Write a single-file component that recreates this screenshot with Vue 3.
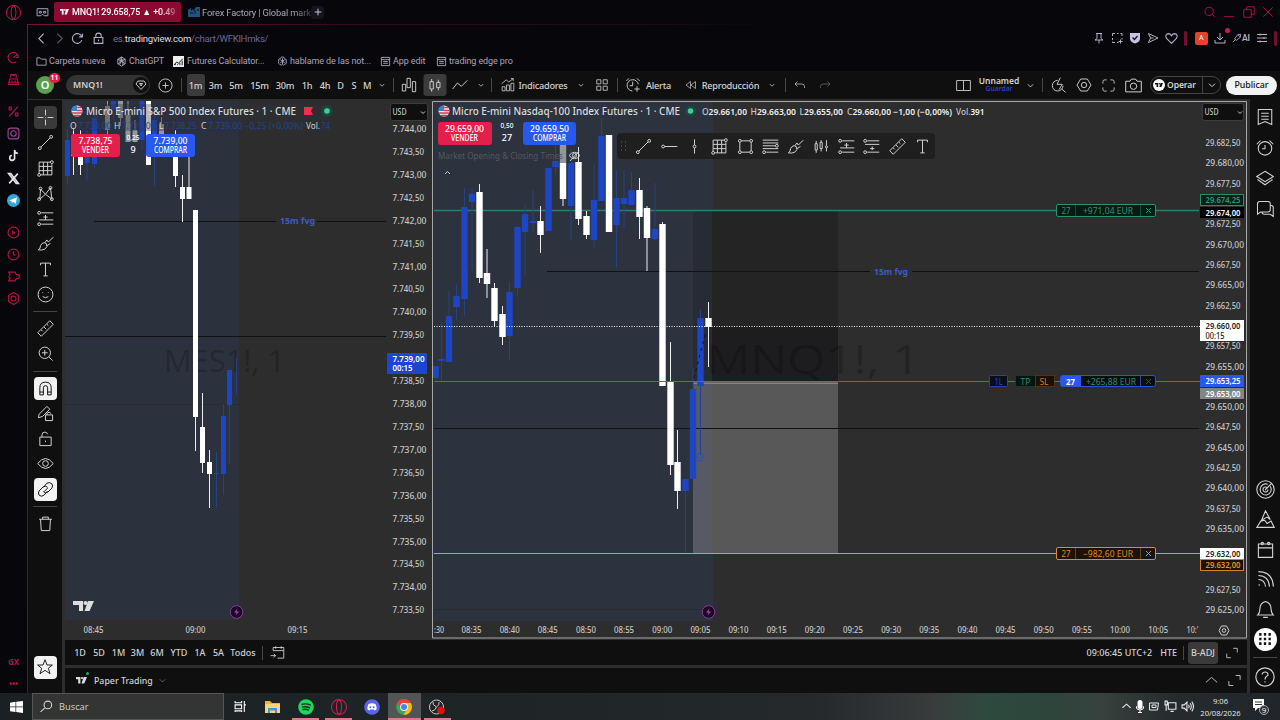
<template>
  <div class="screen">
    <div class="window">
      <aside class="gx-bar">
        <Icon name="opera" :size="17" class="gx-logo" />
        <div v-for="(group, i) in gxGroups" :key="i" class="gx-group">
          <span v-for="item in group" :key="item" class="gx-item" :class="item">
            <svg v-if="item === 'telegram'" width="13" height="13" viewBox="0 0 24 24">
              <circle cx="12" cy="12" r="12" fill="#35a6d8" />
              <path d="M4 12L18.500 6L16 18L11 14.500L9 17L8.500 13.500Z" fill="#fff" />
            </svg>
            <Icon v-else :name="item" :size="13" :weight="item === 'tiktok' || item === 'x' ? 3 : 2.1" />
          </span>
        </div>
        <div class="gx-foot"><span>GX</span><span>•••</span></div>
      </aside>

      <div class="content">
        <header class="tabs">
          <Icon name="mask" :size="13" :weight="1.800" class="workspace" />
          <div class="tab active">
            <TvLogo :w="9" color="#fff" />
            <span class="tab-title">MNQ1! 29.658,75 ▲ +0.49</span>
          </div>
          <div class="tab">
            <svg width="12" height="10" viewBox="0 0 12 10"><path d="M0 3L3 1V4L5 2V4L8 0H12V10H0Z" fill="#24517e" /><path d="M2 6H5M7 3V7M9 3H11" stroke="#0b1828" /></svg>
            <span class="tab-title">Forex Factory | Global mark</span>
          </div>
          <span class="new-tab"><Icon name="add" :size="8" :weight="3" /></span>
          <div class="win-buttons">
            <Icon name="search" :size="14" />
            <Icon name="minimize" :size="14" />
            <Icon name="restore" :size="14" />
            <Icon name="close" :size="14" />
          </div>
        </header>

        <div class="frame">
          <div class="address">
            <Icon name="back" :size="13" :weight="2" />
            <Icon name="forward" :size="13" :weight="2" class="faded" />
            <Icon name="reload" :size="13" :weight="2" />
            <Icon name="lock" :size="13" :weight="2" class="lock" />
            <span class="url"><i>es.</i>tradingview.com<b>/chart/WFKlHmks/</b></span>
            <div class="ext">
              <Icon name="pin" :size="12" :weight="2" />
              <Icon name="snap" :size="12" :weight="2" />
              <svg width="12" height="12" viewBox="0 0 24 24"><path d="M2 2H22V14Q21 20 12 23Q3 20 2 14Z" fill="#c9c0e4" /><path d="M7 11L11 15L17 8" fill="none" stroke="#17131f" stroke-width="2.500" /></svg>
              <Icon name="send" :size="12" :weight="2" />
              <Icon name="heart" :size="13" :weight="2" />
              <span class="bar"></span>
              <span class="ext-a">A</span>
              <span class="download"><Icon name="download" :size="12" :weight="2" /></span>
              <span class="ai"><Icon name="wand" :size="10" :weight="2" />AI</span>
              <Icon name="sliders" :size="12" :weight="2" />
              <span class="bar last"></span>
            </div>
          </div>
          <nav class="bookmarks">
            <span v-for="b in bookmarks" :key="b.label" :style="{ width: b.w + 'px' }">
              <Icon :name="b.icon" :size="11" :weight="2" :class="b.icon" />{{ b.label }}
            </span>
          </nav>

          <div class="tv-top">
            <span class="avatar">O<em>11</em></span>
            <div class="symbol">MNQ1!<span><Icon name="gem" :size="12" :weight="1.900" /></span></div>
            <div
              v-for="(t, i) in topItems"
              :key="i"
              class="slot"
              :class="{ on: t.on, wide: t.icon === 'candles' }"
              :style="{ width: t.w + 'px' }"
            >
              <span v-if="t.sep" class="vsep"></span>
              <span v-else-if="t.text" class="slot-text">{{ t.text }}</span>
              <Icon v-else :name="t.icon" :size="t.size || 16" :weight="t.icon === 'chevron' ? 3 : 1.4" :class="{ faded: t.icon === 'redo' }" />
            </div>
            <div class="top-right">
              <Icon name="layout" :size="15" />
              <div class="saved"><b>Unnamed</b><span>Guardar</span></div>
              <Icon name="chevron" :size="7" :weight="3" />
              <span class="vsep"></span>
              <Icon name="quick" :size="16" />
              <Icon name="hex" :size="16" />
              <Icon name="full" :size="15" />
              <Icon name="camera" :size="17" />
              <div class="trade">
                <span class="trade-logo"><TvLogo :w="8" color="#111" /></span>
                <span class="trade-text">Operar</span>
                <span class="trade-more"><Icon name="chevron" :size="8" :weight="3" /></span>
              </div>
              <div class="publish">Publicar</div>
            </div>
          </div>

          <div class="tv-body">
            <aside class="draw-bar">
              <template v-for="(tool, i) in drawTools" :key="i">
                <hr v-if="tool === '-'" />
                <span v-else class="tool" :class="{ lit: tool === 'cross', white: litTools.includes(tool) }">
                  <span><Icon :name="tool" :size="17" /></span>
                </span>
              </template>
              <span class="tool white star"><span><Icon name="star" :size="16" /></span></span>
            </aside>

            <main class="main">
              <div class="charts">
                <svg class="pane-left" width="366" height="540" viewBox="65 99 366 540">
                  <rect x="65" y="99" width="366" height="540" fill="#2d2d2d" />
                  <rect x="65" y="101" width="174" height="519" fill="#2c313e" />
                  <text class="watermark small" x="164" y="372" textLength="121" lengthAdjust="spacingAndGlyphs">MES1!, 1</text>
                  <path d="M65 404.500H386" stroke="#282b2f" />
                  <path d="M94 221.500H276M317 221.500H386M65 336.500H386" stroke="#111" />
                  <text class="fvg" x="280" y="224" textLength="35" lengthAdjust="spacingAndGlyphs">15m fvg</text>
                  <g v-for="(c, i) in leftCandles" :key="i">
                    <path :d="`M${c[1]} ${c[4]}V${c[5]}`" :stroke="wick(c[0])" />
                    <rect :x="c[1] - 2.500" :y="c[2]" width="5" :height="c[3] - c[2]" :fill="body(c[0])" />
                  </g>
                  <rect x="70" y="104" width="262" height="27" fill="#2c313a" opacity=".35" />
                  <g transform="translate(77 111)"><circle r="5.500" fill="#e9e9ee" /><path d="M-5.500 0A5.500 5.500 0 0 1 0 -5.500V0Z" fill="#3283d6" /><path d="M0 -3.500H4M0 -.5H5.500M-5 2H5M-3 4.500H3" stroke="#dd3b4e" stroke-width="1.300" /></g>
                  <text class="title" x="86" y="115" textLength="210" lengthAdjust="spacingAndGlyphs">Micro E-mini S&amp;P 500 Index Futures · 1 · CME</text>
                  <path d="M304 107H313L311 111L313 115H304Z" fill="#ee304c" />
                  <circle cx="327" cy="111" r="5.500" fill="#164a3c" /><circle cx="327" cy="111" r="2.800" fill="#48c79b" />
                  <g class="ohlc">
                    <text x="70" y="129">O</text><text x="114" y="129">H</text><text x="159" y="129">L</text><text x="201" y="129">C</text>
                    <text x="306" y="129" textLength="14" lengthAdjust="spacingAndGlyphs">Vol.</text>
                    <g class="dim">
                      <text x="77.500" y="129" textLength="34" lengthAdjust="spacingAndGlyphs">7.739,00</text>
                      <text x="121.500" y="129" textLength="34" lengthAdjust="spacingAndGlyphs">7.739,00</text>
                      <text x="164.500" y="129" textLength="32" lengthAdjust="spacingAndGlyphs">7.738,25</text>
                      <text x="208" y="129" textLength="95" lengthAdjust="spacingAndGlyphs">7.739,00 −0,25 (+0,00%)</text>
                      <text x="321" y="129" textLength="9" lengthAdjust="spacingAndGlyphs">74</text>
                    </g>
                  </g>
                  <rect x="71" y="134" width="49" height="23" rx="3" fill="#e3204b" />
                  <rect x="146" y="134" width="49" height="23" rx="3" fill="#2858f0" />
                  <g class="order">
                    <text x="95.500" y="144" textLength="34" lengthAdjust="spacingAndGlyphs">7.738,75</text>
                    <text x="95.500" y="153" textLength="27" lengthAdjust="spacingAndGlyphs">VENDER</text>
                    <text x="170.500" y="144" textLength="34" lengthAdjust="spacingAndGlyphs">7.739,00</text>
                    <text x="170.500" y="153" textLength="33" lengthAdjust="spacingAndGlyphs">COMPRAR</text>
                    <text class="spread" x="133" y="140">0,25</text><text class="qty" x="133" y="153">9</text>
                  </g>
                  <rect x="387" y="101" width="44" height="538" fill="#2d2d2d" />
                  <text v-for="(p, i) in leftPrices" :key="p" class="tick" x="392.500" :y="132 + i * 22.920" :textLength="i % 2 ? 31.500 : 34" lengthAdjust="spacingAndGlyphs">{{ p }}</text>
                  <rect x="387" y="353" width="40" height="21" fill="#1c46d2" />
                  <text class="tick strong" x="392.500" y="361.500" textLength="32" lengthAdjust="spacingAndGlyphs">7.739,00</text>
                  <text class="tick strong" x="392.500" y="371" textLength="20" lengthAdjust="spacingAndGlyphs">00:15</text>
                  <rect x="390.500" y="103.500" width="37" height="17" rx="2" fill="#0f0f0f" stroke="#3c3c3c" />
                  <text class="tick" x="392.500" y="115" textLength="14" lengthAdjust="spacingAndGlyphs">USD</text><path d="M421 111.500L423 113.500L425 111.500" class="stroke" />
                  <text v-for="t in leftTimes" :key="t[0]" class="tick" :x="t[1]" y="633" text-anchor="middle" textLength="20" lengthAdjust="spacingAndGlyphs">{{ t[0] }}</text>
                  <g transform="translate(74 600)"><path d="M0 0H11V12H5V6H0ZM15 0H22L17 12H10Z" fill="#2c313e" stroke="#2c313e" stroke-width="2" /><path d="M-1 1H9V11H5V5H-1ZM14 1H20L15.500 11H10.500Z" fill="#dedede" /><circle cx="11.500" cy="3" r="2" fill="#dedede" /></g>
                  <g transform="translate(236.500 612)" class="bolt"><circle r="6.300" /><path d="M1 -3.500L-2.500 .5H0L-1 3.500L2.500 -.5H0Z" /></g>
                </svg>

                <svg class="pane-right" width="818" height="540" viewBox="431 99 818 540">
                  <rect x="431" y="99" width="818" height="540" fill="#2d2d2d" />
                  <rect x="434" y="102" width="279" height="519" fill="#2c323e" />
                  <path d="M434 609.500H1199" stroke="#292b2d" />
                  <rect x="693" y="211" width="145" height="172" fill="#242424" />
                  <rect x="693" y="211" width="19" height="172" fill="#272b35" />
                  <rect x="712" y="327" width="126" height="55" fill="#1d1d1f" />
                  <text class="watermark" x="706" y="374" textLength="214" lengthAdjust="spacingAndGlyphs">MNQ1!, 1</text>
                  <rect x="693" y="383" width="145" height="170" fill="#585858" />
                  <rect x="693" y="383" width="19" height="170" fill="#575a65" />
                  <path d="M693 383H838" stroke="#a9a9b8" />
                  <path d="M547 271.500H870M912 271.500H1199M434 428.500H1199" stroke="#111" />
                  <text class="fvg" x="874" y="274.500" textLength="34" lengthAdjust="spacingAndGlyphs">15m fvg</text>
                  <path d="M434 210.500H1199" stroke="#2a806a" stroke-width="1.500" />
                  <g v-for="(c, i) in rightCandles" :key="i">
                    <path :d="`M${c[1]} ${c[4]}V${c[5]}`" :stroke="wick(c[0])" />
                    <rect :x="c[1] - 3.200" :y="c[2]" width="6.400" :height="c[3] - c[2]" :fill="body(c[0])" />
                  </g>
                  <path d="M434 326.500H1200" stroke="#fff" stroke-dasharray="1 1.500" />
                  <path d="M434 381.500H1200" stroke="#4f60dc" stroke-width="1.200" />
                  <path d="M434 553.500H1200" stroke="#e59a2a" stroke-width="1.200" />
                  <path d="M694 378L706 331" stroke="#15151a" stroke-dasharray="3 4" />
                  <path d="M700 452L704 457H702V461H698V457H696Z" fill="none" stroke="#2350cc" />
                  <g transform="translate(444 111)"><circle r="5.500" fill="#e9e9ee" /><path d="M-5.500 0A5.500 5.500 0 0 1 0 -5.500V0Z" fill="#3283d6" /><path d="M0 -3.500H4M0 -.5H5.500M-5 2H5M-3 4.500H3" stroke="#dd3b4e" stroke-width="1.300" /></g>
                  <text class="title" x="452" y="115" textLength="228" lengthAdjust="spacingAndGlyphs">Micro E-mini Nasdaq-100 Index Futures · 1 · CME</text>
                  <circle cx="690.500" cy="111" r="5.500" fill="#164a3c" /><circle cx="690.500" cy="111" r="2.800" fill="#48c79b" />
                  <g class="ohlc bright">
                    <text v-for="o in ohlc" :key="o[0]" :x="o[1]" y="115" :textLength="o[2]" lengthAdjust="spacingAndGlyphs"><tspan class="key">{{ o[0] }}</tspan>{{ o[3] }}</text>
                  </g>
                  <rect x="438" y="122" width="54" height="23" rx="3" fill="#e3204b" />
                  <rect x="523" y="122" width="53" height="23" rx="3" fill="#2858f0" />
                  <g class="order">
                    <text x="464.500" y="131.500" textLength="39" lengthAdjust="spacingAndGlyphs">29.659,00</text>
                    <text x="464.500" y="141" textLength="27" lengthAdjust="spacingAndGlyphs">VENDER</text>
                    <text x="549.500" y="131.500" textLength="39" lengthAdjust="spacingAndGlyphs">29.659,50</text>
                    <text x="549.500" y="141" textLength="33" lengthAdjust="spacingAndGlyphs">COMPRAR</text>
                    <text class="spread" x="507" y="128">0,50</text><text class="qty" x="507" y="141">27</text>
                  </g>
                  <text class="study" x="438" y="159" textLength="125" lengthAdjust="spacingAndGlyphs">Market Opening &amp; Closing Times</text>
                  <g class="stroke"><circle cx="574.500" cy="155.500" r="2" /><path d="M569 155.500Q574.500 149 580 155.500Q574.500 162 569 155.500M570 161L579 151M445 174L447.500 171.500L450 174" /></g>
                  <text v-for="p in rightPrices" :key="p.y" class="tick" x="1205.500" :y="p.y" :textLength="p.w" lengthAdjust="spacingAndGlyphs">{{ p.text }}</text>
                  <g v-for="t in priceTags" :key="t.y">
                    <rect x="1200.500" :y="t.y" width="43" :height="t.h" :fill="t.bg" :stroke="t.line" />
                    <text class="tick strong" x="1205.500" :y="t.y + 8.700" textLength="35" lengthAdjust="spacingAndGlyphs" :style="{ fill: t.fg }">{{ t.text }}</text>
                    <text v-if="t.sub" class="tick" x="1205.500" :y="t.y + 18" textLength="19" lengthAdjust="spacingAndGlyphs" :style="{ fill: t.fg }">{{ t.sub }}</text>
                  </g>
                  <rect x="1202.500" y="103.500" width="41" height="17" rx="2" fill="#0f0f0f" stroke="#3c3c3c" />
                  <text class="tick" x="1204.500" y="115" textLength="14" lengthAdjust="spacingAndGlyphs">USD</text><path d="M1238 111.500L1240 113.500L1242 111.500" class="stroke" />
                  <text class="tick" x="434" y="633" textLength="10" lengthAdjust="spacingAndGlyphs">:30</text>
                  <text v-for="(t, i) in rightTimes" :key="t" class="tick" :x="471.500 + i * 38.150" y="633" text-anchor="middle" textLength="20" lengthAdjust="spacingAndGlyphs">{{ t }}</text>
                  <text class="tick" x="1186.500" y="633" textLength="12" lengthAdjust="spacingAndGlyphs">10:'</text>
                  <g v-for="o in orders" :key="o.y" class="tag" :style="{ color: o.color }">
                    <rect x="1056.500" :y="o.y - 5.500" width="99" height="12" rx="1.500" :fill="o.bg" stroke="currentColor" />
                    <path :d="`M1075.500 ${o.y - 5}V${o.y + 6}M1140.500 ${o.y - 5}V${o.y + 6}`" stroke="currentColor" opacity=".4" />
                    <text x="1061.500" :y="o.y + 3.500" textLength="9" lengthAdjust="spacingAndGlyphs">27</text>
                    <text x="1083" :y="o.y + 3.500" textLength="50" lengthAdjust="spacingAndGlyphs">{{ o.text }}</text>
                    <path :d="`M1146 ${o.y - 2}L1151 ${o.y + 3}M1151 ${o.y - 2}L1146 ${o.y + 3}`" stroke="currentColor" />
                  </g>
                  <g class="tag position">
                    <rect x="1060.500" y="375.500" width="95" height="11" rx="2" fill="#0a0d16" stroke="#3350cf" /><path d="M1061 376H1081V386H1061Z" fill="#2858f0" />
                    <path d="M1140.500 376V386M1146 379L1151 384M1151 379L1146 384" stroke="#3b45a3" />
                    <text class="size" x="1066" y="384.500" textLength="9" lengthAdjust="spacingAndGlyphs">27</text>
                    <text class="gain" x="1086" y="384.500" textLength="50" lengthAdjust="spacingAndGlyphs">+265,88 EUR</text>
                    <rect x="989.500" y="375.500" width="18" height="11" rx="1" fill="#0a0d20" stroke="#2b3fae" /><text class="long" x="994.500" y="384.500" textLength="8" lengthAdjust="spacingAndGlyphs">1L</text>
                    <rect x="1015.500" y="375.500" width="20" height="11" fill="#071510" stroke="#164d3b" stroke-dasharray="1 1" /><text class="gain" x="1020.500" y="384.500" textLength="10">TP</text>
                    <rect x="1035.500" y="375.500" width="19" height="11" fill="#1b1007" stroke="#7b481d" stroke-dasharray="1 1" /><text class="loss" x="1039.500" y="384.500" textLength="9">SL</text>
                  </g>
                  <g transform="translate(708.500 612)" class="bolt"><circle r="6.300" /><path d="M1 -3.500L-2.500 .5H0L-1 3.500L2.500 -.5H0Z" /></g>
                  <g class="stroke"><path d="M1221.500 626H1226.500L1229 630.500L1226.500 635H1221.500L1219 630.500Z" /><circle cx="1224" cy="630.500" r="1.800" /></g>
                  <path d="M432.500 101.500H1246.500V638H432.500Z" fill="none" stroke="#a9a9a9" />
                </svg>
                <div class="floating">
                  <svg class="grip" width="7" height="10" viewBox="0 0 7 10"><path d="M1 1H2M5 1H6M1 5H2M5 5H6M1 9H2M5 9H6" stroke="#666" stroke-width="1.200" /></svg>
                  <Icon v-for="f in floatTools" :key="f" :name="f" :size="17" />
                </div>
              </div>

              <div class="range-bar">
                <span v-for="r in ranges" :key="r[0]" :style="{ width: r[1] + 'px' }">{{ r[0] }}</span>
                <i class="vsep"></i>
                <Icon name="goto" :size="15" />
                <div class="clock">
                  <span class="time">09:06:45 UTC+2</span><span>HTE</span><i class="vsep"></i>
                  <b>B-ADJ</b><Icon name="expand" :size="14" />
                </div>
              </div>
              <div class="account">
                <span class="acc-logo"><TvLogo :w="11" color="#ddd" /></span>
                Paper Trading
                <Icon name="chevron" :size="7" :weight="3" class="faded" />
                <div><Icon name="up" :size="15" /><Icon name="expand" :size="15" /></div>
              </div>
            </main>

            <aside class="right-bar">
              <span v-for="r in rightTop" :key="r"><Icon :name="r" :size="18" /></span>
              <div class="right-bottom">
                <span v-for="r in rightBottom" :key="r"><Icon :name="r" :size="19" /></span>
                <span><i class="apps"><Icon name="dots" :size="14" :weight="4.500" /></i></span>
                <hr />
                <span class="help"><Icon name="help" :size="20" /></span>
              </div>
            </aside>
          </div>
        </div>
      </div>
    </div>

    <footer class="taskbar">
      <span class="start"><svg width="13" height="12" viewBox="0 0 13 12"><path d="M0 1.700L5.500 .8V5.500H0ZM6.200 .7L13 0V5.500H6.200ZM0 6.200H5.500V11L0 10.200ZM6.200 6.200H13V12L6.200 11.100Z" fill="#fff" /></svg></span>
      <div class="find"><Icon name="lens" :size="13" :weight="2" />Buscar</div>
      <span class="app"><Icon name="taskview" :size="13" :weight="2" /></span>
      <span class="app"><svg width="16" height="13" viewBox="0 0 16 13"><path d="M0 1H5L7 3H15V13H0Z" fill="#e8b640" /><path d="M0 4H15V13H0Z" fill="#f7d774" /><path d="M3 8H12V13H10V10.500H5V13H3Z" fill="#3b9ad9" /></svg></span>
      <span class="app run"><svg width="16" height="16" viewBox="0 0 16 16"><circle cx="8" cy="8" r="7.800" fill="#1ed760" /><path d="M3.500 5.500Q8 4 12.800 6.300M4 8.200Q8 7 12 9M4.500 10.700Q8 9.700 11 11.300" fill="none" stroke="#10331c" stroke-width="1.400" /></svg></span>
      <span class="app run opera-app"><Icon name="opera" :size="18" /></span>
      <span class="app"><svg width="16" height="16" viewBox="0 0 16 16"><circle cx="8" cy="8" r="7.800" fill="#5865e8" /><path d="M4.500 5Q8 3.500 11.500 5Q13 8 12.500 10.500L10.500 11.500L9.800 10.500H6.200L5.500 11.500L3.500 10.500Q3 8 4.500 5" fill="#fff" /><circle cx="6.300" cy="8.300" r="1" fill="#5865e8" /><circle cx="9.700" cy="8.300" r="1" fill="#5865e8" /></svg></span>
      <span class="app run current"><svg width="16" height="16" viewBox="0 0 16 16"><circle cx="8" cy="8" r="7.800" fill="#34a853" /><path d="M1.200 4.100A7.800 7.800 0 0 1 14.800 4.100H8L5 9.500Z" fill="#ea4335" /><path d="M14.800 4.100A7.800 7.800 0 0 1 7.500 15.800L11 9.800L8 4.100Z" fill="#fbbc05" /><circle cx="8" cy="8" r="3.900" fill="#fff" /><circle cx="8" cy="8" r="3" fill="#4285f4" /></svg></span>
      <span class="app run"><svg width="18" height="16" viewBox="0 0 18 16"><circle cx="8.500" cy="8" r="7" fill="#222" stroke="#ccc" /><path d="M8.500 8Q4 6 5 3M8.500 8Q12 6 11 3M8.500 8Q7 12 4 12" fill="none" stroke="#ccc" /><circle cx="13" cy="11.500" r="3.800" fill="#e60d0d" /></svg></span>
      <div class="tray">
        <Icon name="up" :size="11" :weight="2.400" />
        <svg width="8" height="13" viewBox="0 0 8 13"><rect x="1.500" width="5" height="9" rx="2.500" fill="#fff" /><path d="M0 6Q0 10 4 10Q8 10 8 6M4 10V13M2 12.500H6" fill="none" stroke="#fff" /></svg>
        <Icon name="onedrive" :size="12" :weight="2" />
        <Icon name="network" :size="13" :weight="2" />
        <Icon name="volume" :size="13" :weight="2" />
        <div class="date"><span>9:06</span><span>20/08/2026</span></div>
        <span><svg width="16" height="16" viewBox="0 0 16 16"><path d="M0 0H11V9H5L2 12V9H0Z" fill="#fff" /><path d="M2 3H9M2 5.500H9" stroke="#333" /><circle cx="11" cy="11" r="4.500" fill="#333" stroke="#aaa" /><text x="8.800" y="14" font-size="8" fill="#fff">9</text></svg></span>
      </div>
    </footer>
  </div>
</template>

<script setup>
import { h } from 'vue'

const paths = {
  opera: 'M12 2A10 10 0 1 0 12 22A10 10 0 1 0 12 2M12 3C7.500 3 7.500 21 12 21C16.500 21 16.500 3 12 3',
  mask: 'M2 5H22V18H15L12 15L9 18H2ZM6 10H10V13H6ZM14 10H18V13H14Z',
  add: 'M12 2V22M2 12H22',
  search: 'M10.500 4A7 7 0 1 0 10.500 18A7 7 0 1 0 10.500 4M16 16L21 21',
  lens: 'M14.500 2A7 7 0 1 0 14.500 16A7 7 0 1 0 14.500 2M9.500 14L1 22',
  minimize: 'M3 20H21',
  restore: 'M3 8H16V21H3ZM8 8V3H21V16H16',
  close: 'M4 4L20 20M20 4L4 20',
  back: 'M16 3L7 12L16 21',
  forward: 'M8 3L17 12L8 21',
  reload: 'M20 9A9 9 0 1 0 20 15M21 3V9H15',
  lock: 'M4 10H20V21H4ZM7 10V7Q7 2 12 2Q17 2 17 7V10M12 14V17',
  pin: 'M6 3H18M8 3V13L4 16H20L16 13V3M12 16V23',
  snap: 'M3 8V3H8M12 3H15M19 3H22V8M3 12V16M3 19V21H8M12 21H15M22 12V15M15 19H23M19 15V23',
  send: 'M3 3L22 12L3 21L7 12ZM7 12H13',
  heart: 'M12 21L3 12Q-1 5 6 3Q10 3 12 7Q14 3 18 3Q25 5 21 12Z',
  download: 'M12 2V15M6 10L12 16L18 10M2 16V22H22V16',
  wand: 'M2 22L9 15M6 14L14 4L21 3L20 10L10 18ZM14 4L20 10',
  sliders: 'M2 5H22M2 12H22M2 19H22M8 3V7M16 10V14M8 17V21',
  folder: 'M2 4H9L12 7H22V20H2Z',
  gpt: 'M12 2L20 7V17L12 22L4 17V7ZM4 7L15 13M12 2V12L20 17M20 7L9 13M4 17L15 11M9 4V18M15 6V20',
  calc: 'M2 20L8 13L12 16L21 6M5 20V17M10 20V18M15 20V15M20 20V10',
  claude: 'M12 2Q16 2 17 6Q22 7 20 12Q22 17 17 18Q14 22 12 18Q9 22 6 18Q1 16 4 12Q1 7 7 6Q8 2 12 2M12 5V18M7 8L17 15M17 8L7 15',
  page: 'M3 3H21V21H3ZM3 8H21M7 12H17M7 16H17',
  gauge: 'M21 11A9.500 9.500 0 1 0 17 20M12 12L20 6M16 12H22',
  robot: 'M7 9V3H17V9M3 21L5 11H19L21 21ZM8 15H10M14 15H16M10 5H14M2 17H22',
  percent: 'M20 3L4 21M4 4H8V9H4ZM16 15H20V20H16Z',
  instagram: 'M7 2H17Q22 2 22 7V17Q22 22 17 22H7Q2 22 2 17V7Q2 2 7 2M12 7A5 5 0 1 0 12 17A5 5 0 1 0 12 7M18 5V6',
  tiktok: 'M14 2V16A4.500 4.500 0 1 1 9 12M14 2Q14 8 20 8',
  x: 'M3 3L17 21H21L7 3ZM20 3L4 21',
  play: 'M12 2A10 10 0 1 0 12 22A10 10 0 1 0 12 2M10.500 9.500L14 12L10.500 14.500Z',
  clock: 'M12 2A10 10 0 1 0 12 22A10 10 0 1 0 12 2M12 6V13H16',
  puzzle: 'M3 4H15L17 8Q23 8 23 12Q23 16 17 16L15 20H3L6 15Q1 12 6 9Z',
  gear: 'M12 1L21 6V18L12 23L3 18V6ZM12 7.500A4.500 4.500 0 1 0 12 16.500A4.500 4.500 0 1 0 12 7.500',
  gem: 'M6 4H18L22 10L12 21L2 10ZM9 9H15L12 14Z',
  plus: 'M12 1.500A10.500 10.500 0 1 0 12 22.500A10.500 10.500 0 1 0 12 1.500M12 7V17M7 12H17',
  chevron: 'M3 8L12 17L21 8',
  up: 'M3 15L12 7L21 15',
  bars: 'M2 11H7V21H2ZM9 2H14V16H9ZM17 7H22V22H17Z',
  candles: 'M4.500 7H9.500V18H4.500ZM14.500 8H19.500V16H14.500ZM7 3V7M7 18V22M17 4V8M17 16V20',
  line: 'M1 18L8 9L14 14L23 5',
  indicators: 'M2 22V15H7V22ZM9.500 22V12H14.500V22ZM17 22V9H22V22ZM1 10L9 3L13 7L21 1M17 1H21V5',
  grid4: 'M3 3H10V10H3ZM14 3H21V10H14ZM3 14H10V21H3ZM14 14H21V21H14Z',
  alarmPlus: 'M20 11A8.500 8.500 0 1 0 11 21M11.500 7V13H7M2 6L6 2M18 2L22 6M18 14V22M14 18H22',
  replay: 'M11 5V19L2 12ZM21 5V19L12 12Z',
  undo: 'M7 5L2 10L7 15M2 10H16Q21 10 21 15V18',
  redo: 'M17 5L22 10L17 15M22 10H8Q3 10 3 15V18',
  layout: 'M1 4H23V20H1ZM12 4V20',
  quick: 'M10 5A8 8 0 1 0 18 13M16 18L22 23M14 1L9 11H17L12 19',
  hex: 'M7 3H17L22.500 12L17 21H7L1.500 12ZM12 8A4 4 0 1 0 12 16A4 4 0 1 0 12 8',
  full: 'M3 9V6Q3 3 6 3H9M15 3H18Q21 3 21 6V9M21 15V18Q21 21 18 21H15M9 21H6Q3 21 3 18V15',
  camera: 'M1 6H7L9 3H15L17 6H23V21H1ZM12 8.500A4.500 4.500 0 1 0 12 17.500A4.500 4.500 0 1 0 12 8.500',
  cross: 'M12 1V9M12 15V23M1 12H9M15 12H23M12 11.500V12.500',
  trend: 'M5.500 18.500L18.500 5.500M4 18A2 2 0 1 0 4 22A2 2 0 1 0 4 18M20 2A2 2 0 1 0 20 6A2 2 0 1 0 20 2',
  hline: 'M5 12H23M3 10A2 2 0 1 0 3 14A2 2 0 1 0 3 10',
  vline: 'M12 2V10M12 14V22M12 10A2 2 0 1 0 12 14A2 2 0 1 0 12 10',
  mesh: 'M3 3H19M3 3V19M9 3V21M15 3V21M21 6V21H5M3 9H21M3 15H21M3 19A2 2 0 1 0 3 23A2 2 0 1 0 3 19M21 1A2 2 0 1 0 21 5A2 2 0 1 0 21 1',
  rect: 'M4 6V18M6 20H18M20 18V6M18 4H6M4 2A2 2 0 1 0 4 6A2 2 0 1 0 4 2M20 2A2 2 0 1 0 20 6A2 2 0 1 0 20 2M4 18A2 2 0 1 0 4 22A2 2 0 1 0 4 18M20 18A2 2 0 1 0 20 22A2 2 0 1 0 20 18',
  fib: 'M1 3H23M1 7H23M1 11H19M1 15H23M6 20H23M21 9A2 2 0 1 0 21 13A2 2 0 1 0 21 9M3 18A2 2 0 1 0 3 22A2 2 0 1 0 3 18',
  pattern: 'M4 20L5 6L12 13L19 4L21 20L12 13L4 20M5 3A2 2 0 1 0 5 7A2 2 0 1 0 5 3M19 2A2 2 0 1 0 19 6A2 2 0 1 0 19 2M3 18A2 2 0 1 0 3 22A2 2 0 1 0 3 18M21 18A2 2 0 1 0 21 22A2 2 0 1 0 21 18',
  position: 'M6 4H23M3 14H23M6 20H23M12 7V14M9 10H15M3 2A2 2 0 1 0 3 6A2 2 0 1 0 3 2M3 18A2 2 0 1 0 3 22A2 2 0 1 0 3 18',
  shortpos: 'M6 4H23M3 9H23M6 20H23M13 12V17M10 15H16M3 2A2 2 0 1 0 3 6A2 2 0 1 0 3 2M3 18A2 2 0 1 0 3 22A2 2 0 1 0 3 18',
  brush: 'M2 21Q5 19 5 15Q8 9 13 12Q16 17 11 20Q7 22 2 21M11 11L14 7L16 10L23 3M14 15L19 12',
  bars2: 'M3 8H6V17H3ZM4.500 4V8M4.500 17V21M10 6H13V15H10ZM11.500 3V6M11.500 15V19M19 11A1.500 1.500 0 1 0 19 14A1.500 1.500 0 1 0 19 11M19 3V11M19 14V19',
  text: 'M5 6V3H19V6M12 3V21M9 21H15',
  smile: 'M12 1.500A10.500 10.500 0 1 0 12 22.500A10.500 10.500 0 1 0 12 1.500M8 9V10M16 9V10M8 15Q12 18 16 15',
  ruler: 'M1 18L18 1L23 6L6 23ZM6 14L8 16M10 10L13 13M14 6L16 8',
  zoomin: 'M11 3A8 8 0 1 0 11 19A8 8 0 1 0 11 3M17 17L22 22M11 7V15M7 11H15',
  magnet: 'M4 21V11Q4 3 12 3Q20 3 20 11V21H15V11Q15 8 12 8Q9 8 9 11V21ZM4 17H9M15 17H20',
  penlock: 'M2 18L3 13L14 2L18 6L8 16ZM12 14H22V22H12ZM14 14V12Q17 8 20 12',
  unlock: 'M4 10H20V22H4ZM7 10V7Q7 3 11 3Q14 3 15 6M12 15V17',
  eye: 'M1 12Q12 -2 23 12Q12 26 1 12M12 8A4 4 0 1 0 12 16A4 4 0 1 0 12 8',
  link: 'M10 15L15 10M9 9L14 3Q18 1 21 4Q23 7 21 10L15 16Q12 18 9 15M15 14L10 20Q6 23 3 20Q1 17 3 14L9 8Q12 6 15 9',
  trash: 'M3 6H21M8 6V3H16V6M5 6L6 22H18L19 6',
  star: 'M12 1L15 9H23L17 14L19.500 22L12 17L4.500 22L7 14L1 9H9Z',
  watch: 'M3 2H21V22L12 18L3 22ZM7 7H17M7 11H17M7 15H17',
  alarm: 'M12 3.500A9 9 0 1 0 12 21.500A9 9 0 1 0 12 3.500M12 8V13H8M1 7L6 2M18 2L23 7',
  layers: 'M12 3L23 10L12 17L1 10ZM2 14L12 21L22 14',
  chat: 'M5 2H16Q19 2 19 5V13Q19 16 16 16H6L2 19V5Q2 2 5 2M19 7Q23 7 23 10V22L19 19H11Q8 19 8 16',
  target: 'M12 1A11 11 0 1 0 12 23A11 11 0 1 0 12 1M18 8A7 7 0 1 1 15 5.500M14 9.500A3.200 3.200 0 1 0 15.200 12M12 12L20 4M12 11V13',
  pyramid: 'M12 1L18 12L14 9L7 13ZM6 14L1 22H23L19 14L14 17L11 13Z',
  calendar: 'M3 5H21V22H3ZM3 10H21M8 3A1.500 1.500 0 1 0 8 6A1.500 1.500 0 1 0 8 3M16 3A1.500 1.500 0 1 0 16 6A1.500 1.500 0 1 0 16 3',
  feed: 'M4 18V20M3 12Q11 12 12 21M3 7Q16 7 17 21M3 2Q21 2 22 21',
  bell: 'M2 19Q5 16 5 11Q5 4 12 2Q19 4 19 11Q19 16 22 19ZM9 22H15',
  dots: 'M2 4H6M10 4H14M18 4H22M2 12H6M10 12H14M18 12H22M2 20H6M10 20H14M18 20H22',
  help: 'M12 1A11 11 0 1 0 12 23A11 11 0 1 0 12 1M8.500 9Q9 6 12 6Q16 6 15.500 10Q12 12 12 15M12 17V18.500',
  goto: 'M5 9V4H22V21H12M5 9H22M9 2V6M18 2V6M1 17H9M6 14L9 17L6 20',
  expand: 'M14 4H21V11M3 13V20H10',
  taskview: 'M2 2V5H14V2M2 9H14V16H2ZM2 22V20H14V22M19 2V22M18 9H22',
  onedrive: 'M3 4H21L19 18H3ZM8 8H16V13H8Z',
  network: 'M8 5H22V17H8ZM12 21H18M2 2V9H6V2ZM4 9V20',
  volume: 'M2 9H6L11 4V20L6 15H2ZM14 9Q16 12 14 15M17 6Q21 12 17 18M20 3Q26 12 20 21'
}

const Icon = (props) =>
  h('svg', { width: props.size, height: props.size, viewBox: '0 0 24 24', fill: 'none', stroke: 'currentColor', 'stroke-width': props.weight || 1.4 },
    [h('path', { d: paths[props.name] })])
Icon.props = ['name', 'size', 'weight']

const TvLogo = (props) =>
  h('svg', { width: props.w, height: props.w * 0.6, viewBox: '0 0 20 12', fill: props.color },
    [h('path', { d: 'M0 0H8V12H4V4H0ZM14 0H20L15 12H10Z' }), h('circle', { cx: 11, cy: 2, r: 2 })])
TvLogo.props = ['w', 'color']

const gxGroups = [
  ['gauge', 'robot'],
  ['percent', 'instagram', 'tiktok', 'x', 'telegram'],
  ['play', 'clock', 'puzzle', 'gear']
]

const bookmarks = [
  { icon: 'folder', label: 'Carpeta nueva', w: 80 },
  { icon: 'gpt', label: 'ChatGPT', w: 57 },
  { icon: 'calc', label: 'Futures Calculator...', w: 104 },
  { icon: 'claude', label: 'hablame de las not...', w: 103 },
  { icon: 'page', label: 'App edit', w: 56 },
  { icon: 'page', label: 'trading edge pro', w: 90 }
]

const topItems = [
  { icon: 'plus', w: 30, size: 15 }, { sep: true, w: 3 },
  { text: '1m', w: 25, on: true }, { text: '3m', w: 15 }, { text: '5m', w: 26 },
  { text: '15m', w: 21 }, { text: '30m', w: 30 }, { text: '1h', w: 14 },
  { text: '4h', w: 22 }, { text: 'D', w: 9 }, { text: 'S', w: 18 }, { text: 'M', w: 8 },
  { icon: 'chevron', w: 22, size: 6 }, { sep: true, w: 1 },
  { icon: 'bars', w: 30 }, { icon: 'candles', w: 22, on: true }, { icon: 'line', w: 28 }, { icon: 'chevron', w: 14, size: 6 }, { sep: true, w: 7 },
  { icon: 'indicators', w: 26, size: 14 }, { text: 'Indicadores', w: 44 }, { icon: 'chevron', w: 32, size: 6 }, { icon: 'grid4', w: 10, size: 14 }, { sep: true, w: 21 },
  { icon: 'alarmPlus', w: 10 }, { text: 'Alerta', w: 41 }, { icon: 'replay', w: 23, size: 12 }, { text: 'Reproducción', w: 57 },
  { icon: 'chevron', w: 26, size: 6 }, { sep: true, w: 1 }, { icon: 'undo', w: 28, size: 12 }, { icon: 'redo', w: 22, size: 12 }
]

const drawTools = ['cross', 'trend', 'mesh', 'pattern', 'position', 'brush', 'text', 'smile', '-', 'ruler', 'zoomin', '-', 'magnet', 'penlock', 'unlock', 'eye', 'link', '-', 'trash']
const litTools = ['magnet', 'link']
const floatTools = ['trend', 'hline', 'vline', 'mesh', 'rect', 'fib', 'brush', 'bars2', 'position', 'shortpos', 'ruler', 'text']
const rightTop = ['watch', 'alarm', 'layers', 'chat']
const rightBottom = ['target', 'pyramid', 'calendar', 'feed', 'bell']

// [kind, x, bodyTop, bodyBottom, wickTop, wickBottom]
// kinds: w = down, b = up, g = down candle behind the legend
const leftCandles = [
  ['b', 67.5, 140, 176, 130, 184], ['w', 73.5, 140, 156, 128, 175], ['w', 80.5, 140, 165, 130, 175],
  ['b', 87, 150, 163, 130, 180], ['b', 94.5, 118, 164, 112, 168], ['g', 107.5, 106, 130, 101, 140],
  ['b', 113.5, 101, 109, 101, 120], ['g', 120.5, 101, 118, 101, 126], ['g', 128, 115, 142, 101, 142],
  ['g', 135, 130, 142, 120, 142], ['b', 142, 101, 140, 101, 150], ['w', 148.5, 101, 165, 101, 165],
  ['b', 154.5, 120, 134, 110, 186], ['g', 161.5, 124, 134, 117, 145], ['w', 175.5, 155, 176, 130, 187],
  ['w', 182.5, 187, 199, 175, 222], ['w', 189, 187, 199, 155, 199], ['w', 195.5, 210, 417, 210, 451],
  ['w', 202.5, 427, 463, 393, 473], ['w', 209.5, 462, 474, 450, 508], ['b', 216.5, 473, 474, 452, 507],
  ['b', 223.5, 416, 474, 404, 495], ['b', 229.5, 370, 405, 370, 464], ['b', 236.5, 359, 359, 358, 395]
]

const rightCandles = [
  ['b', 435.5, 366, 378, 366, 380], ['b', 441.5, 359, 361, 323, 381], ['b', 449, 316, 362, 291, 362],
  ['b', 456.5, 296, 307, 284, 320], ['b', 464.5, 207, 299, 188, 316], ['b', 472, 194, 202, 188, 270],
  ['w', 479.5, 192, 278, 184, 283], ['w', 487, 273, 284, 249, 298], ['w', 494.5, 288, 321, 283, 326],
  ['w', 502.5, 314, 337, 306, 345], ['b', 509.5, 292, 336, 282, 360], ['b', 517.5, 227, 288, 226, 296],
  ['b', 525, 214, 232, 205, 275], ['b', 533, 221, 223, 190, 232], ['w', 540.5, 221, 235, 206, 253],
  ['b', 548.5, 168, 231, 168, 231], ['b', 555.5, 161, 167, 145, 175], ['g', 563, 145, 163, 145, 163],
  ['w', 563, 163, 199, 163, 206], ['b', 571, 163, 206, 150, 240], ['w', 578.5, 162, 219, 147, 225],
  ['w', 586.5, 216, 235, 211, 239], ['b', 594, 200, 240, 163, 248], ['b', 601.5, 136, 201, 118, 201],
  ['w', 609, 135, 232, 135, 232], ['b', 616.5, 198, 225, 170, 267], ['b', 624, 198, 204, 170, 228],
  ['b', 631.5, 190, 205, 172, 205], ['w', 639.5, 190, 217, 178, 239], ['w', 647, 208, 238, 206, 271],
  ['b', 655, 229, 239, 183, 240], ['w', 662.5, 224, 386, 222, 386], ['w', 670.5, 382, 465, 342, 475],
  ['w', 677.5, 462, 491, 430, 509], ['b', 685.5, 479, 491, 479, 553], ['b', 693, 389, 479, 368, 479],
  ['b', 700.5, 318, 386, 310, 455], ['w', 708.5, 318, 327, 302, 367]
]

const body = (kind) => ({ w: '#fff', b: '#1d45c4', g: '#93969d' })[kind]
const wick = (kind) => ({ w: '#eee', b: '#294083', g: '#93969d' })[kind]

const format = (n) => n.toFixed(2).replace('.', ',').replace(/(\d)(\d{3}),/, '$1.$2,')
const leftPrices = Array.from({ length: 22 }, (_, i) => format(7744 - i * 0.5))
// levels sitting under a price tag are skipped
const coveredLevels = [29675, 29660, 29652.5, 29632.5, 29630]
const rightPrices = Array.from({ length: 24 }, (_, i) => ({
  value: 29682.5 - i * 2.5,
  text: format(29682.5 - i * 2.5),
  y: 146 + i * 20.32,
  w: i % 2 ? 38.5 : 35
})).filter((p) => !coveredLevels.includes(p.value))
const leftTimes = [['08:45', 93.5], ['09:00', 195.5], ['09:15', 297.5]]
const rightTimes = Array.from({ length: 19 }, (_, i) => {
  const m = 8 * 60 + 35 + i * 5
  return `${String(Math.floor(m / 60)).padStart(2, '0')}:${String(m % 60).padStart(2, '0')}`
})

const ohlc = [
  ['O', 702, 45, '29.661,00'], ['H', 750.5, 45.5, '29.663,00'], ['L', 799.5, 43.5, '29.655,00'],
  ['C', 847, 105, '29.660,00 −1,00 (−0,00%)'], ['Vol.', 956, 28.5, '391']
]

const priceTags = [
  { y: 194.5, h: 11, text: '29.674,25', bg: '#062018', line: '#2b8a68', fg: '#2b9a73' },
  { y: 207.5, h: 10, text: '29.674,00', bg: '#000', line: '#000', fg: '#fff' },
  { y: 320.5, h: 20, text: '29.660,00', sub: '00:15', bg: '#fff', line: '#fff', fg: '#222' },
  { y: 375.5, h: 11, text: '29.653,25', bg: '#2858f0', line: '#2858f0', fg: '#fff' },
  { y: 388.5, h: 10, text: '29.653,00', bg: '#858585', line: '#858585', fg: '#fff' },
  { y: 548.5, h: 10, text: '29.632,00', bg: '#fff', line: '#fff', fg: '#222' },
  { y: 559.5, h: 11, text: '29.632,00', bg: '#1f1006', line: '#d28324', fg: '#ef8d28' }
]

const orders = [
  { y: 210, text: '+971,04 EUR', color: '#28936e', bg: '#071b14' },
  { y: 553, text: '−982,60 EUR', color: '#dd8a2c', bg: '#1b1208' }
]

const ranges = [['1D', 18], ['5D', 20], ['1M', 19], ['3M', 19], ['6M', 20], ['YTD', 24], ['1A', 18], ['5A', 19], ['Todos', 30]]
</script>

<style>
body {
  background: #06060b;
  overflow: hidden;
}
</style>

<style scoped>
.screen {
  width: 1280px;
  height: 720px;
  display: flex;
  flex-direction: column;
  overflow: hidden;
  background: #06060b;
  color: #d2d2d2;
  font-family: "Noto Sans", "Open Sans", sans-serif;
  font-size: 9px;
  white-space: nowrap;
}
.screen svg { flex: none; display: block; }
.window { height: 693px; display: flex; }
.faded { opacity: .5; }

.gx-bar {
  width: 27px;
  display: flex;
  flex-direction: column;
  align-items: center;
  color: #b51343;
}
.gx-logo { margin: 4px 0 25px; color: #d3164d; }
.gx-group { display: flex; flex-direction: column; margin-bottom: 10.5px; }
.gx-item { height: 22.1px; display: flex; align-items: center; justify-content: center; }
.gx-item.tiktok, .gx-item.x { color: #e6e6ea; }
.gx-item.instagram { color: #a3409a; }
.gx-foot { margin-top: auto; display: flex; flex-direction: column; align-items: center; gap: 11px; font-size: 8px; font-weight: 700; line-height: 11px; padding-bottom: 4px; }

.content { flex: 1; display: flex; flex-direction: column; min-width: 0; }
.tabs { height: 24px; display: flex; align-items: center; font-family: Roboto, sans-serif; font-size: 9.8px; }
.workspace { margin: 0 5px 0 9px; color: #a9a4bd; }
.tab { display: flex; align-items: center; gap: 2px; height: 20px; width: 128px; padding-left: 7px; box-sizing: border-box; color: #a9a4b5; }
.tab.active { width: 127px; padding-left: 6px; gap: 3px; background: #8c0932; color: #fff; border-radius: 2px; font-weight: 500; }
.tab-title { font-size: 9.3px; letter-spacing: -.15px; -webkit-mask-image: linear-gradient(90deg, #000 84%, rgba(0, 0, 0, .3) 100%); }
.tab.active .tab-title { font-size: 9px; }
.new-tab { color: #c5c0d4; width: 13px; height: 13px; display: flex; align-items: center; justify-content: center; background: #15131c; border-radius: 3px; margin-left: 2px; }
.win-buttons { margin-left: auto; display: flex; gap: 5.5px; padding-right: 5px; color: #c31549; }

.frame { flex: 1; min-height: 0; display: flex; flex-direction: column; border-top: 1px solid; border-left: 1px solid #4f0b23; border-image: linear-gradient(100deg, #7c1033 0, #3a0a1d 22%, #150a12 48%, #06060b 55%) 1; }
.address { height: 26px; display: flex; align-items: center; padding-left: 7px; gap: 5px; font-family: Roboto, sans-serif; font-size: 9.6px; color: #b5b0c5; }
.lock { margin-left: 3px; }
.url { margin-left: 3px; color: #dcdae6; letter-spacing: -.25px; }
.url i { font-style: normal; color: #77728c; }
.url b { font-weight: 400; color: #6e6695; }
.ext { margin-left: auto; display: flex; align-items: center; gap: 6px; padding-right: 3px; }
.bar { width: 3px; height: 15px; border-radius: 2px; background: #720e30; }
.ext-a { width: 13px; height: 13px; line-height: 13px; border-radius: 2px; background: #e0442b; color: #fff; font-size: 7px; text-align: center; margin-left: 2px; }
.download { position: relative; }
.download::after { content: ""; position: absolute; right: -4px; top: -4px; width: 5px; height: 5px; border-radius: 50%; background: #cf1650; }
.ai { display: flex; align-items: center; font-weight: 600; font-size: 8.5px; }
.bookmarks { height: 20px; display: flex; align-items: center; padding-left: 8px; font-family: Roboto, sans-serif; font-size: 9px; letter-spacing: -.1px; color: #aaa5bb; }
.bookmarks span { display: flex; align-items: center; gap: 2px; }
.bookmarks .calc { background: #eee; color: #111; margin-right: 1px; }

.tv-top { height: 28px; display: flex; align-items: center; background: #0f0f0f; font-size: 9.2px; font-weight: 500; box-sizing: border-box; }
.avatar { position: relative; width: 18px; height: 18px; margin: 0 12px 0 8px; border-radius: 50%; background: #59a150; color: #fff; font-size: 11px; line-height: 18px; text-align: center; font-weight: 600; }
.avatar em { position: absolute; left: 13px; top: -3px; width: 11px; height: 10px; line-height: 10px; border-radius: 5px; background: #e51e49; font-size: 7px; font-style: normal; }
.symbol { width: 84px; height: 20px; border-radius: 10px; background: #333; display: flex; align-items: center; justify-content: space-between; padding-left: 7px; box-sizing: border-box; font-weight: 600; font-size: 8.8px; }
.symbol span { width: 16px; height: 16px; margin-right: 1px; border-radius: 50%; background: #111; display: flex; align-items: center; justify-content: center; }
.slot { display: flex; align-items: center; justify-content: center; height: 22px; flex: none; }
.slot.on { position: relative; z-index: 0; }
.slot.on::before { content: ""; position: absolute; z-index: -1; left: 50%; width: 18px; height: 22px; transform: translateX(-50%); background: #3b3b3b; border-radius: 3px; }
.slot.wide::before { width: 23px; }
.slot-text { letter-spacing: -.25px; }
.vsep { width: 1px; height: 14px; background: #484848; flex: none; }
.top-right { margin-left: auto; display: flex; align-items: center; padding-right: 3px; }
.saved { width: 40px; margin: 0 8px; display: flex; flex-direction: column; align-items: center; line-height: 8px; font-size: 8.5px; }
.saved b { font-weight: 600; }
.saved span { color: #3545d8; font-size: 6.8px; }
.top-right > .vsep { margin: 0 8px; }
.top-right > svg + svg { margin-left: 9px; }
.trade { margin-left: 8px; width: 71px; height: 18px; border: 1px solid #444; box-sizing: border-box; border-radius: 10px; display: flex; align-items: center; }
.trade-logo { width: 12px; height: 12px; border-radius: 50%; background: #fff; margin-left: 2px; display: flex; align-items: center; justify-content: center; }
.trade-text { margin-left: 2px; font-weight: 600; font-size: 8.6px; letter-spacing: -.1px; }
.trade-more { margin-left: auto; width: 17px; height: 16px; border-left: 1px solid #444; display: flex; align-items: center; justify-content: center; }
.publish { margin-left: 5px; width: 51px; height: 19px; line-height: 19px; text-align: center; border-radius: 10px; background: #f2f2f2; color: #111; font-weight: 500; font-size: 8.8px; }

.tv-body { flex: 1; min-height: 0; display: flex; background: #2e2e2e; }
.draw-bar { width: 34px; padding-top: 5px; margin-right: 3px; background: #0f0f0f; display: flex; flex-direction: column; align-items: center; border-top: 1px solid #2e2e2e; box-sizing: border-box; }
.draw-bar hr, .right-bar hr { width: 24px; height: 1px; border: 0; margin: 4px 0; background: #444; flex: none; }
.tool { height: 25.25px; display: flex; align-items: center; flex: none; }
.tool > span { width: 23px; height: 23px; border-radius: 4px; display: flex; align-items: center; justify-content: center; }
.tool.lit > span { background: #3a3a3a; }
.tool.white > span { background: #f2f2f2; color: #111; }
.star { margin-top: auto; margin-bottom: 13px; }
.main { width: 1182px; display: flex; flex-direction: column; }
.charts { position: relative; height: 540px; display: flex; flex: none; }
.floating { position: absolute; left: 552px; top: 34px; width: 318px; height: 26px; box-sizing: border-box; background: #1f1f1f; border-radius: 4px; display: flex; align-items: center; justify-content: space-between; padding: 0 4px 0 3px; }

.charts text { fill: #d2d2d2; font-size: 8.5px; }
.charts .watermark { fill: #000; opacity: .2; font-size: 40px; font-weight: 400; font-family: "Open Sans", sans-serif; }
.charts .watermark.small { font-size: 31px; }
.charts .title { font-size: 10px; font-weight: 500; fill: #dcdcdc; }
.charts .fvg { font-size: 8.8px; font-weight: 700; fill: #3e5bc6; }
.charts .dim text { fill: #26428f; }
.charts .bright text { fill: #f0f0f0; font-weight: 600; }
.charts .bright .key { fill: #c8c8c8; font-weight: 500; }
.charts .order text { fill: #fff; font-size: 8px; font-weight: 500; text-anchor: middle; }
.charts .order .spread { font-size: 6.5px; }
.charts .order .qty { font-size: 9px; }
.charts .study { fill: #55585d; font-size: 8.4px; }
.charts .tick { fill: #c6c6c6; font-weight: 500; }
.charts .tick.strong { fill: #fff; font-weight: 600; }
.charts .tag text { fill: currentColor; }
.charts .position .size { fill: #fff; font-weight: 700; }
.charts .position .gain { fill: #259068; }
.charts .position .loss { fill: #d77a2a; }
.charts .position .long { fill: #2b47c4; }
.stroke { fill: none; stroke: #cfcfcf; }
.bolt circle { fill: #1c0822; stroke: #8a3a99; }
.bolt path { fill: #a14bb0; }

.range-bar { height: 25px; margin-top: 1px; background: #0f0f0f; display: flex; align-items: center; padding: 0 8px 0 6px; font-size: 9px; font-weight: 500; }
.range-bar span { text-align: center; }
.range-bar > .vsep { margin: 0 7px 0 4px; }
.clock { margin-left: auto; display: flex; align-items: center; }
.clock .time { margin-right: 8px; }
.clock .vsep { margin: 0 4px 0 6px; }
.clock b { width: 30px; height: 22px; line-height: 22px; text-align: center; border-radius: 3px; background: #3a3a3a; font-weight: 500; margin-right: 7px; }
.account { flex: 1; margin-top: 3px; background: #0f0f0f; display: flex; align-items: center; padding: 0 5px 0 11px; gap: 7px; font-size: 8.8px; font-weight: 500; }
.account > div { margin-left: auto; display: flex; gap: 8px; }
.account > svg { margin-left: -1px; }
.acc-logo { position: relative; }
.acc-logo::after { content: ""; position: absolute; right: -2px; top: -5px; width: 3px; height: 3px; border-radius: 50%; background: #22a57a; }

.right-bar { margin-left: auto; width: 30px; background: #0f0f0f; display: flex; flex-direction: column; align-items: center; padding-top: 3px; box-sizing: border-box; }
.right-bar span { height: 30.5px; display: flex; align-items: center; flex: none; }
.right-bottom { margin-top: auto; display: flex; flex-direction: column; align-items: center; }
.right-bottom span { height: 30px; }
.right-bar hr { margin: 3px 0; }
.apps { width: 23px; height: 23px; border-radius: 50%; background: #fff; color: #111; display: flex; align-items: center; justify-content: center; }
.right-bottom .help { height: 32px; }

.taskbar { height: 27px; display: flex; background: linear-gradient(90deg, #1b2023 0, #202528 45%, #25292b 64%, #383c3d 73%, #2e4a3e 77%, #2c453b 82%, #37413d 86%, #252a2d 92%, #20262a); font-family: "Open Sans", sans-serif; }
.start { width: 32px; display: flex; align-items: center; justify-content: center; }
.find { width: 192px; box-sizing: border-box; border: 1px solid #555; background: #333434; display: flex; align-items: center; gap: 6px; padding-left: 7px; font-size: 9.3px; }
.app { width: 32.8px; display: flex; align-items: center; justify-content: center; box-sizing: border-box; color: #fff; }
.app.run { background: linear-gradient(#d97c86, #d97c86) center bottom / 27px 2px no-repeat; }
.app.current { background-color: #525456; background-size: 33px 2px; }
.app.opera-app { color: #d01c50; }
.tray { margin-left: auto; display: flex; align-items: center; gap: 4px; color: #e8e8e8; padding-right: 11px; }
.date { display: flex; flex-direction: column; align-items: center; font-size: 7.6px; line-height: 12px; width: 41px; margin: 0 8px 0 2px; }
</style>
